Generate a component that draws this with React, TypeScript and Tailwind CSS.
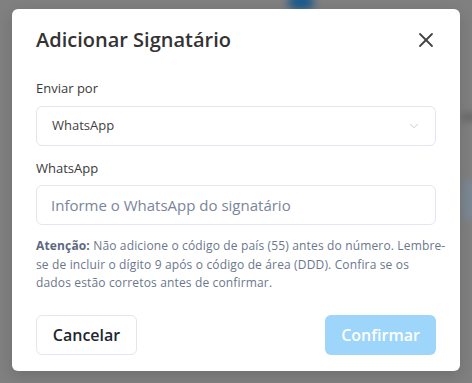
import { X, ChevronDown } from "lucide-react";

export default function App() {
  return (
    <div className="relative w-[472px] h-[383px] overflow-hidden bg-[#808080] font-['Open_Sans',sans-serif]">
      {/* app behind the overlay */}
      <div className="absolute left-[288px] top-[-6px] w-[26px] h-[16px] rounded-full bg-[#1a5a8c] blur-[4px]" />
      <div className="absolute left-[462px] top-[112px] w-[20px] h-[10px] bg-[#6c6c6c] blur-[3px]" />
      <div className="absolute left-[462px] top-[180px] w-[20px] h-[40px] bg-[#7b8795] blur-[4px]" />

      <div className="absolute left-[12px] top-[9px] w-[448px] h-[362px] rounded-[6px] bg-white px-6 pt-[16px] shadow-[0_4px_16px_rgba(0,0,0,0.15)]">
        <div className="flex items-center justify-between h-[30px]">
          <h2 className="text-[20px] font-semibold text-[#333333]">Adicionar Signatário</h2>
          <button className="mr-[-2px] text-[#444444]">
            <X size={24} strokeWidth={1.8} />
          </button>
        </div>

        <div className="mt-[24px]">
          <label className="block text-[13px] leading-[18px] text-[#3a3a3a]">Enviar por</label>
          <div className="mt-[9px] flex h-[40px] items-center justify-between rounded-[6px] border border-[#e2e6ee] pl-[15px] pr-[14px]">
            <span className="text-[13px] text-[#3f3f3f]">WhatsApp</span>
            <ChevronDown size={14} strokeWidth={1.5} className="text-[#c0c4cc]" />
          </div>
        </div>

        <div className="mt-[13px]">
          <label className="block text-[13px] leading-[18px] text-[#3a3a3a]">WhatsApp</label>
          <div className="mt-[8px] flex h-[40px] items-center rounded-[6px] border border-[#e2e6ee] pl-[14px]">
            <span className="text-[15px] text-[#7a8599]">Informe o WhatsApp do signatário</span>
          </div>
        </div>

        <p className="mt-[12px] whitespace-nowrap text-[12px] leading-[18.5px] tracking-[0.15px] text-[#6b778c]">
          <span className="font-bold text-[#5c6880]">Atenção:</span> Não adicione o código de país (55) antes do número. Lembre-
          <br />
          se de incluir o dígito 9 após o código de área (DDD). Confira se os
          <br />
          dados estão corretos antes de confirmar.
        </p>

        <div className="mt-[22px] flex items-center justify-between">
          <button className="h-[40px] w-[101px] rounded-[6px] border border-[#e2e6ee] text-[16px] font-semibold text-[#22262e]">
            Cancelar
          </button>
          <button className="h-[40px] w-[111px] rounded-[6px] bg-[#9dd5fb] text-[16px] font-semibold text-white">
            Confirmar
          </button>
        </div>
      </div>
    </div>
  );
}
